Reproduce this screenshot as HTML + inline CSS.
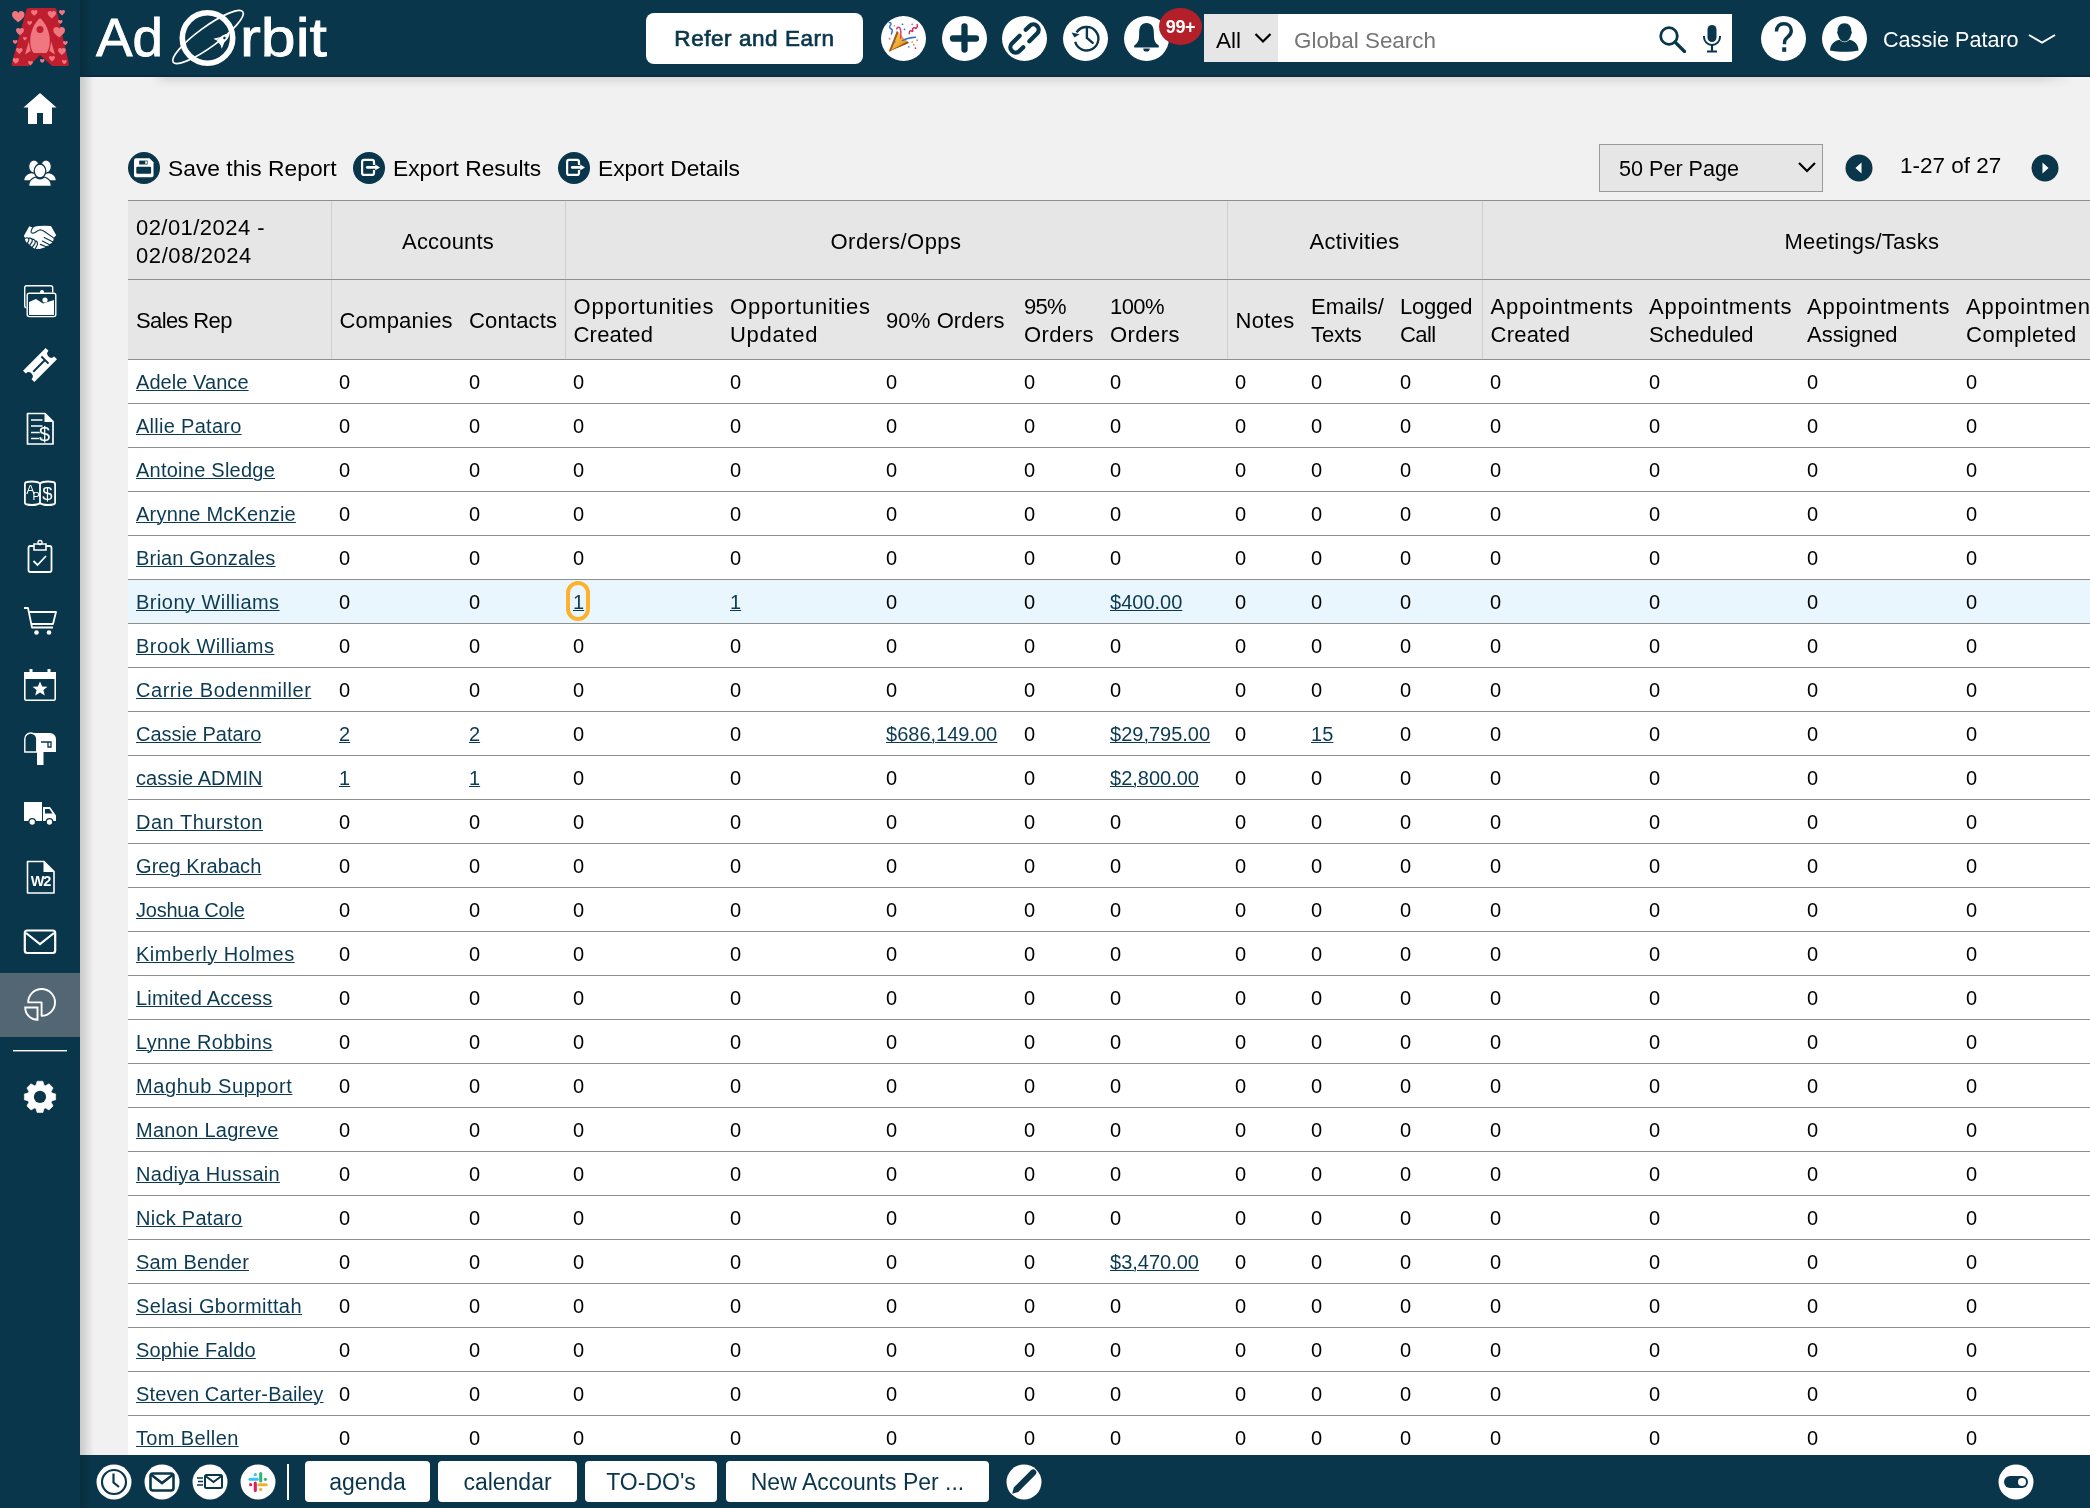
<!DOCTYPE html>
<html><head><meta charset="utf-8">
<style>
*{box-sizing:border-box;margin:0;padding:0}
html,body{width:2090px;height:1508px;overflow:hidden;-webkit-font-smoothing:antialiased;background:#f1f1f1;font-family:"Liberation Sans",sans-serif;color:#000}
.abs{position:absolute}
#hdr{position:absolute;left:0;top:0;width:2090px;height:77px;background:#0a364b}
#side{position:absolute;left:0;top:0;width:80px;height:1508px;background:#0a364b;z-index:5}
#shadowL{position:absolute;left:80px;top:77px;width:14px;height:1380px;background:linear-gradient(to right,rgba(0,0,0,0.16),rgba(0,0,0,0))}
#foot{position:absolute;left:80px;top:1455px;width:2010px;height:53px;background:#0a364b;z-index:4}
.circ{position:absolute;border-radius:50%;background:#fff}
table{will-change:transform;position:absolute;left:128px;top:200px;border-collapse:collapse;table-layout:fixed;width:2113px;background:#fff}
th{font-weight:normal;text-align:left;background:#e6e6e6;font-size:22px;line-height:28px;padding:2px 0 0 8px;vertical-align:middle;white-space:nowrap}
thead tr.r1 th{height:79px;padding-top:4px;border-top:1px solid #8f8f8f;border-bottom:1px solid #8f8f8f}
thead tr.r2 th{height:80px;border-bottom:1px solid #8f8f8f}
th.g{text-align:center;padding:0}
.vb{border-left:1px solid #cfcfcf}
td{font-size:20px;height:44px;padding:2px 0 0 8px;border-bottom:1px solid #8f8f8f;white-space:nowrap;vertical-align:middle}
td a{color:#0b3a52;text-decoration:underline;text-underline-offset:0.7px;text-decoration-thickness:1px}
tr.hl td{background:#e9f6fe}
</style></head>
<body>
<div id="root" style="position:absolute;left:0;top:0;width:2090px;height:1508px;will-change:transform;overflow:hidden">
<div id="hdr"></div>
<!-- HEADER -->
<div id="hdrin" style="position:absolute;left:0;top:0;width:2090px;height:77px;z-index:6">
<div style="position:absolute;left:80px;top:0;width:12px;height:77px;background:linear-gradient(to right,rgba(0,0,0,0.18),rgba(0,0,0,0))"></div>
<!-- red A logo -->
<svg class="abs" style="left:5px;top:3px" width="70" height="70" viewBox="0 0 70 70">
<path d="M23.5 5 L49.5 5 Q51 5 51.5 6.5 L64 61 Q64.3 63 62.5 63 L48 63 Q47 63 46 62 L35 52 L25 62 Q24 63 23 63 L8 63 Q6.3 63 6.6 61 L21.5 6.5 Q22 5 23.5 5 Z" fill="#be1e2d"/>
<g fill="#f07680">
<path d="M35 15 C40 19 44.8 28 44.8 38 C44.8 43 43.5 47.5 41.5 50 L28.5 50 C26.5 47.5 25.2 43 25.2 38 C25.2 28 30 19 35 15 Z"/>
<path d="M23.8 38.5 L20 51.5 L25.6 48 Z"/><path d="M46.2 38.5 L50 51.5 L44.4 48 Z"/>
</g>
<circle cx="35" cy="26.5" r="3.5" fill="#be1e2d"/>
<g fill="#f07680"><path transform="translate(7 8.1) scale(12.5)" d="M0.5 0.9 C0.2 0.65 0 0.5 0 0.27 C0 0.1 0.12 0 0.27 0 C0.38 0 0.46 0.07 0.5 0.15 C0.54 0.07 0.62 0 0.73 0 C0.88 0 1 0.1 1 0.27 C1 0.5 0.8 0.65 0.5 0.9 Z"/><path transform="translate(26 7) scale(6.5)" d="M0.5 0.9 C0.2 0.65 0 0.5 0 0.27 C0 0.1 0.12 0 0.27 0 C0.38 0 0.46 0.07 0.5 0.15 C0.54 0.07 0.62 0 0.73 0 C0.88 0 1 0.1 1 0.27 C1 0.5 0.8 0.65 0.5 0.9 Z"/><path transform="translate(42.7 8) scale(8.3)" d="M0.5 0.9 C0.2 0.65 0 0.5 0 0.27 C0 0.1 0.12 0 0.27 0 C0.38 0 0.46 0.07 0.5 0.15 C0.54 0.07 0.62 0 0.73 0 C0.88 0 1 0.1 1 0.27 C1 0.5 0.8 0.65 0.5 0.9 Z"/><path transform="translate(54 7) scale(6)" d="M0.5 0.9 C0.2 0.65 0 0.5 0 0.27 C0 0.1 0.12 0 0.27 0 C0.38 0 0.46 0.07 0.5 0.15 C0.54 0.07 0.62 0 0.73 0 C0.88 0 1 0.1 1 0.27 C1 0.5 0.8 0.65 0.5 0.9 Z"/><path transform="translate(53 17) scale(4.5)" d="M0.5 0.9 C0.2 0.65 0 0.5 0 0.27 C0 0.1 0.12 0 0.27 0 C0.38 0 0.46 0.07 0.5 0.15 C0.54 0.07 0.62 0 0.73 0 C0.88 0 1 0.1 1 0.27 C1 0.5 0.8 0.65 0.5 0.9 Z"/><path transform="translate(22.3 18) scale(4.7)" d="M0.5 0.9 C0.2 0.65 0 0.5 0 0.27 C0 0.1 0.12 0 0.27 0 C0.38 0 0.46 0.07 0.5 0.15 C0.54 0.07 0.62 0 0.73 0 C0.88 0 1 0.1 1 0.27 C1 0.5 0.8 0.65 0.5 0.9 Z"/><path transform="translate(11 25) scale(8)" d="M0.5 0.9 C0.2 0.65 0 0.5 0 0.27 C0 0.1 0.12 0 0.27 0 C0.38 0 0.46 0.07 0.5 0.15 C0.54 0.07 0.62 0 0.73 0 C0.88 0 1 0.1 1 0.27 C1 0.5 0.8 0.65 0.5 0.9 Z"/><path transform="translate(48.3 24) scale(11.7)" d="M0.5 0.9 C0.2 0.65 0 0.5 0 0.27 C0 0.1 0.12 0 0.27 0 C0.38 0 0.46 0.07 0.5 0.15 C0.54 0.07 0.62 0 0.73 0 C0.88 0 1 0.1 1 0.27 C1 0.5 0.8 0.65 0.5 0.9 Z"/><path transform="translate(18 34) scale(3.8)" d="M0.5 0.9 C0.2 0.65 0 0.5 0 0.27 C0 0.1 0.12 0 0.27 0 C0.38 0 0.46 0.07 0.5 0.15 C0.54 0.07 0.62 0 0.73 0 C0.88 0 1 0.1 1 0.27 C1 0.5 0.8 0.65 0.5 0.9 Z"/><path transform="translate(7.9 37) scale(4.6)" d="M0.5 0.9 C0.2 0.65 0 0.5 0 0.27 C0 0.1 0.12 0 0.27 0 C0.38 0 0.46 0.07 0.5 0.15 C0.54 0.07 0.62 0 0.73 0 C0.88 0 1 0.1 1 0.27 C1 0.5 0.8 0.65 0.5 0.9 Z"/><path transform="translate(58 38) scale(4.7)" d="M0.5 0.9 C0.2 0.65 0 0.5 0 0.27 C0 0.1 0.12 0 0.27 0 C0.38 0 0.46 0.07 0.5 0.15 C0.54 0.07 0.62 0 0.73 0 C0.88 0 1 0.1 1 0.27 C1 0.5 0.8 0.65 0.5 0.9 Z"/><path transform="translate(11 45) scale(6.6)" d="M0.5 0.9 C0.2 0.65 0 0.5 0 0.27 C0 0.1 0.12 0 0.27 0 C0.38 0 0.46 0.07 0.5 0.15 C0.54 0.07 0.62 0 0.73 0 C0.88 0 1 0.1 1 0.27 C1 0.5 0.8 0.65 0.5 0.9 Z"/><path transform="translate(53 45) scale(7.8)" d="M0.5 0.9 C0.2 0.65 0 0.5 0 0.27 C0 0.1 0.12 0 0.27 0 C0.38 0 0.46 0.07 0.5 0.15 C0.54 0.07 0.62 0 0.73 0 C0.88 0 1 0.1 1 0.27 C1 0.5 0.8 0.65 0.5 0.9 Z"/><path transform="translate(7.7 55) scale(6.3)" d="M0.5 0.9 C0.2 0.65 0 0.5 0 0.27 C0 0.1 0.12 0 0.27 0 C0.38 0 0.46 0.07 0.5 0.15 C0.54 0.07 0.62 0 0.73 0 C0.88 0 1 0.1 1 0.27 C1 0.5 0.8 0.65 0.5 0.9 Z"/><path transform="translate(23 58) scale(4.9)" d="M0.5 0.9 C0.2 0.65 0 0.5 0 0.27 C0 0.1 0.12 0 0.27 0 C0.38 0 0.46 0.07 0.5 0.15 C0.54 0.07 0.62 0 0.73 0 C0.88 0 1 0.1 1 0.27 C1 0.5 0.8 0.65 0.5 0.9 Z"/><path transform="translate(35 56) scale(4.5)" d="M0.5 0.9 C0.2 0.65 0 0.5 0 0.27 C0 0.1 0.12 0 0.27 0 C0.38 0 0.46 0.07 0.5 0.15 C0.54 0.07 0.62 0 0.73 0 C0.88 0 1 0.1 1 0.27 C1 0.5 0.8 0.65 0.5 0.9 Z"/><path transform="translate(44 53) scale(6)" d="M0.5 0.9 C0.2 0.65 0 0.5 0 0.27 C0 0.1 0.12 0 0.27 0 C0.38 0 0.46 0.07 0.5 0.15 C0.54 0.07 0.62 0 0.73 0 C0.88 0 1 0.1 1 0.27 C1 0.5 0.8 0.65 0.5 0.9 Z"/><path transform="translate(57 57) scale(4.7)" d="M0.5 0.9 C0.2 0.65 0 0.5 0 0.27 C0 0.1 0.12 0 0.27 0 C0.38 0 0.46 0.07 0.5 0.15 C0.54 0.07 0.62 0 0.73 0 C0.88 0 1 0.1 1 0.27 C1 0.5 0.8 0.65 0.5 0.9 Z"/></g>
</svg>
<!-- AdOrbit wordmark -->
<svg class="abs" style="left:90px;top:0" width="250" height="77" viewBox="90 0 250 77">
<text x="96" y="56" font-family="Liberation Sans" font-size="53" fill="#fff" stroke="#fff" stroke-width="0.8" textLength="67" lengthAdjust="spacingAndGlyphs">Ad</text>
<circle cx="207.5" cy="38" r="25.2" fill="none" stroke="#fff" stroke-width="5.6"/>
<ellipse cx="208" cy="37" rx="43" ry="10" fill="none" stroke="#fff" stroke-width="1.7" transform="rotate(-36 208 37)"/>
<g transform="translate(222.5 39.5) rotate(50)"><path d="M0 -9 C3.2 -6 3.8 -1 3.2 5 L-3.2 5 C-3.8 -1 -3.2 -6 0 -9 Z M-3.2 0 L-6.5 6.5 L-3 5 Z M3.2 0 L6.5 6.5 L3 5 Z" fill="#fff"/><circle cx="0" cy="-2.5" r="1.3" fill="#0a364b"/></g>
<text x="240" y="56" font-family="Liberation Sans" font-size="53" fill="#fff" stroke="#fff" stroke-width="0.8" textLength="87" lengthAdjust="spacingAndGlyphs">rbit</text>
</svg>
<!-- Refer and Earn -->
<div class="abs" style="left:646px;top:13px;width:217px;height:51px;background:#fff;border-radius:8px;color:#0a364b;font-weight:normal;-webkit-text-stroke:0.7px #0a364b;font-size:22.5px;line-height:51px;text-align:center;letter-spacing:0.55px">Refer and Earn</div>
<!-- circle icons -->
<div class="circ" style="left:881px;top:16px;width:45px;height:45px"></div>
<svg class="abs" style="left:881px;top:16px" width="45" height="45" viewBox="0 0 45 45">
<defs><linearGradient id="pg" x1="0" y1="0" x2="1" y2="1"><stop offset="0" stop-color="#fbe26a"/><stop offset="0.6" stop-color="#eea52c"/><stop offset="1" stop-color="#b5621a"/></linearGradient></defs>
<path d="M7.9 35.5 L15.9 14.9 L27.8 26.9 Z" fill="url(#pg)"/>
<path d="M7.9 35.5 L15.9 14.9 L17.5 16.5 L10 35 Z" fill="#a8561c"/>
<path d="M7.9 35.5 L27.8 26.9 L26.5 25.6 L9 34.8 Z" fill="#9c4d15"/>
<path d="M8.2 6.5 Q10.5 6.5 10 8.5 Q7.5 11 9.5 12.5 Q12 13.5 11 16 L10.4 18" stroke="#2f6fe0" stroke-width="1.4" fill="none" stroke-linecap="round"/>
<path d="M15.6 12.8 Q17.2 10 19 12 Q20.4 15 19.6 22" stroke="#e0306e" stroke-width="1.4" fill="none" stroke-linecap="round"/>
<path d="M28.2 17.8 Q28.2 14 30.5 15 Q32.5 16.5 31.5 13 Q33 11 35 12.5 Q37 11 36.2 8.5" stroke="#d02e5e" stroke-width="1.4" fill="none" stroke-linecap="round"/>
<path d="M21.5 24.5 Q27 21.5 34.5 21.2" stroke="#2f6fe0" stroke-width="1.4" fill="none" stroke-linecap="round"/>
<g><circle cx="21.5" cy="8.3" r="0.9" fill="#2f6fe0"/><circle cx="13.3" cy="9.9" r="0.9" fill="#e2b93b"/><circle cx="23.5" cy="13.3" r="0.9" fill="#2f6fe0"/><circle cx="31.2" cy="8.3" r="0.9" fill="#e2609a"/><circle cx="8.6" cy="22.7" r="0.9" fill="#e2609a"/><circle cx="13.6" cy="25.9" r="0.9" fill="#2f6fe0"/><circle cx="31.2" cy="25.9" r="0.9" fill="#d9b13b"/><circle cx="36.1" cy="24.2" r="0.9" fill="#ea7a3a"/><circle cx="32.8" cy="28.8" r="0.9" fill="#ea7a3a"/><circle cx="27.8" cy="30.8" r="0.9" fill="#3f7fe0"/><circle cx="34.5" cy="32.2" r="0.9" fill="#d8306a"/></g>
</svg>
<div class="circ" style="left:942px;top:16px;width:45px;height:45px"></div>
<svg class="abs" style="left:942px;top:16px" width="45" height="45" viewBox="0 0 45 45"><path d="M22.5 10.5 V33.5 M11 22.5 H34" stroke="#0a364b" stroke-width="6.3" stroke-linecap="round"/></svg>
<div class="circ" style="left:1002px;top:16px;width:45px;height:45px"></div>
<svg class="abs" style="left:1002px;top:16px" width="45" height="45" viewBox="0 0 45 45"><g transform="translate(22.5 22.5) rotate(-45)" fill="none" stroke="#0a364b" stroke-width="4.3" stroke-linecap="round"><path d="M7 -5.3 H12.5 A5.3 5.3 0 0 1 12.5 5.3 H1.5"/><path d="M-7 5.3 H-12.5 A5.3 5.3 0 0 1 -12.5 -5.3 H-1.5"/></g></svg>
<div class="circ" style="left:1063px;top:16px;width:45px;height:45px"></div>
<svg class="abs" style="left:1063px;top:16px" width="45" height="45" viewBox="0 0 45 45"><g fill="none" stroke="#0a364b" stroke-width="2.4"><path d="M12.2 25.8 A11.8 11.8 0 1 0 13.6 16.4"/><path d="M23.9 12.3 V22 L29.7 26.8" stroke-linecap="round"/></g><path d="M8.6 16.6 L16.6 18.3 L11.4 21.6 Z" fill="#0a364b"/></svg>
<div class="circ" style="left:1124px;top:16px;width:45px;height:45px"></div>
<svg class="abs" style="left:1124px;top:16px" width="45" height="45" viewBox="0 0 45 45"><path d="M22.5 7 C17.5 7 15.3 10.5 15.2 16 L15 21.5 C14.8 25 13.2 27.5 10.2 29.6 V31.4 H34.8 V29.6 C31.8 27.5 30.2 25 30 21.5 L29.8 16 C29.7 10.5 27.5 7 22.5 7 Z" fill="#0a364b"/><path d="M19.3 32.4 H25.7 a3.2 3.2 0 0 1 -6.4 0Z" fill="#0a364b"/></svg>
<div class="abs" style="left:1159px;top:8px;width:43px;height:37px;border-radius:50%;background:#b3202a;color:#fff;font-weight:bold;font-size:18px;line-height:39px;text-align:center;letter-spacing:-0.3px">99+</div>
<!-- search -->
<div class="abs" style="left:1204px;top:14px;width:74px;height:48px;background:#e6e6e6"></div>
<div class="abs" style="left:1216px;top:14px;height:48px;line-height:53px;font-size:22.5px;color:#000">All</div>
<svg class="abs" style="left:1254px;top:32px" width="18" height="12" viewBox="0 0 18 12"><path d="M1.5 2 L9 9.5 L16.5 2" fill="none" stroke="#000" stroke-width="2.2"/></svg>
<div class="abs" style="left:1278px;top:14px;width:454px;height:48px;background:#fff"></div>
<div class="abs" style="left:1294px;top:14px;height:48px;line-height:53px;font-size:22.4px;color:#757575">Global Search</div>
<svg class="abs" style="left:1658px;top:25px" width="30" height="28" viewBox="0 0 30 28"><circle cx="11" cy="11" r="8.3" fill="none" stroke="#0a364b" stroke-width="2.8"/><path d="M17 17 L26.5 26.5" stroke="#0a364b" stroke-width="3.2" stroke-linecap="round"/></svg>
<svg class="abs" style="left:1700px;top:24px" width="24" height="30" viewBox="0 0 24 30"><rect x="7.5" y="1" width="9" height="17" rx="4.5" fill="#0a364b"/><path d="M4 12 V13 a8 8 0 0 0 16 0 V12" fill="none" stroke="#0a364b" stroke-width="2"/><path d="M12 21 V27 M7 27.5 H17" stroke="#0a364b" stroke-width="2.2"/></svg>
<!-- help / user -->
<div class="circ" style="left:1761px;top:16px;width:45px;height:45px"></div>
<svg class="abs" style="left:1761px;top:16px" width="45" height="45" viewBox="0 0 45 45"><path d="M15.5 15.5 C15.5 10.5 18.5 7.8 22.8 7.8 C27.3 7.8 30.3 10.8 30.3 14.8 C30.3 18.2 28.5 19.8 26.3 21.4 C24.3 22.9 23.5 23.8 23.5 26.5 V28.3" fill="none" stroke="#0a364b" stroke-width="3.4"/><rect x="21.2" y="31.3" width="4" height="4.5" fill="#0a364b"/></svg>
<div class="circ" style="left:1822px;top:16px;width:45px;height:45px"></div>
<svg class="abs" style="left:1822px;top:16px" width="45" height="45" viewBox="0 0 45 45"><path d="M22.5 7.3 C18 7.3 15.6 10.5 15.6 15 C15 15.5 15 18 15.9 18.5 C16.8 22.5 19.2 25.6 22.5 25.6 C25.8 25.6 28.2 22.5 29.1 18.5 C30 18 30 15.5 29.4 15 C29.4 10.5 27 7.3 22.5 7.3Z" fill="#0a364b"/><path d="M8 34.5 C8 28.5 12.5 25 17.5 23.8 C19 25.3 20.7 26.3 22.5 26.3 C24.3 26.3 26 25.3 27.5 23.8 C32.5 25 36.5 28.5 36.5 34.5 C30 36.2 15 36.2 8 34.5 Z" fill="#0a364b"/></svg>
<div class="abs" style="left:1883px;top:16px;height:48px;line-height:48px;font-size:21.6px;color:#fff">Cassie Pataro</div>
<svg class="abs" style="left:2027px;top:32px" width="30" height="14" viewBox="0 0 30 14"><path d="M2 3 L15 10.5 L28 3" fill="none" stroke="#fff" stroke-width="2"/></svg>
</div>

<div id="side"></div>
<!-- SIDEBAR ICONS -->
<div class="abs" style="left:0;top:973px;width:80px;height:64px;background:#526673;z-index:6"></div>
<svg class="abs" style="left:0;top:0;z-index:7" width="80" height="1508" viewBox="0 0 80 1508">
<g fill="#fff">
<!-- home -->
<path d="M40 93 L56.5 107.5 L52 107.5 L52 124 L43 124 L43 113 L37 113 L37 124 L28 124 L28 107.5 L23.5 107.5 Z"/>
<!-- people -->
<g stroke="#0a364b" stroke-width="1.3">
<path d="M23.5 181 C23.5 176 26.5 173.5 31 172.5 L38 172.5 L38 181 Z"/>
<path d="M56.5 181 C56.5 176 53.5 173.5 49 172.5 L42 172.5 L42 181 Z"/>
<ellipse cx="34" cy="166.5" rx="5.4" ry="6.6"/><ellipse cx="46" cy="166.5" rx="5.4" ry="6.6"/>
<ellipse cx="40" cy="171" rx="5.8" ry="7"/>
<path d="M28.5 186.5 C28.5 181.5 31 178.5 35.5 177 C37 178.2 38.6 178.8 40 178.8 C41.4 178.8 43 178.2 44.5 177 C49 178.5 51.5 181.5 51.5 186.5 Z"/>
</g>
<!-- handshake -->
<path d="M29.3 226.3 L33 227.8 Q35 226.4 38.5 226.1 Q44 225.6 51 226 L56.2 235.3 L53.6 237.9 Q54 240 52.8 241.2 Q52 243.4 50 243.9 Q49 245.8 46.8 246 Q45 247.8 42 248.3 Q40 249.2 37.6 248.8 Q35.5 249.5 33.5 248 Q31.5 247.3 31 245.8 Q28.8 245.6 28.6 243.6 Q26 243.3 25.6 241 Q24.5 239.5 25.2 238 L23.8 236 Z"/>
<g fill="none" stroke="#0a364b" stroke-width="1.15" stroke-linecap="round">
<path d="M32.6 227.8 Q30.6 231 31.3 232.5 Q32.5 234 35.5 232.2 Q38.3 229.8 40.3 229.7 Q42 229.8 44 231.2 L53.6 237.9"/>
<path d="M44.2 237.6 L52.6 241.8 M42.4 241.1 L50 245 M40.4 244.4 L46.8 247"/>
<path d="M25.6 238.2 Q27 237.3 28.4 238.3 Q29.3 239.8 28.6 241.3 L27 243.4 M28.4 238.3 Q30.5 237.5 31.9 239.2 Q32.7 240.6 31.9 242.2 L29.3 245.6 M31.9 239.2 Q33.8 238.7 35 240.7 Q35.6 242.2 34.8 243.6 L32 247.6 M35 240.7 Q37.4 241 37.5 243.6 Q37.5 245 36.6 246.2 L35.4 248.6"/>
</g>
<!-- images -->
<rect x="24.7" y="285.7" width="28" height="22" rx="2" fill="none" stroke="#fff" stroke-width="1.4"/>
<rect x="26.5" y="292.5" width="30" height="25" rx="2" fill="#0a364b"/>
<rect x="27.2" y="293.2" width="28.6" height="23.4" rx="2" fill="none" stroke="#fff" stroke-width="1.4"/>
<path d="M29 315 L29 302 L36 299 L43 303.5 L54 300 L54 315 Z"/><circle cx="45" cy="300" r="2.6"/><circle cx="42" cy="292" r="2" />
<!-- ticket -->
<g transform="rotate(-45 40 365)"><path d="M24 357 L56 357 L56 361 a4 4 0 0 0 0 8 L56 373 L24 373 L24 369 a4 4 0 0 0 0 -8 Z"/></g>
<g transform="rotate(-45 40 365)" stroke="#0a364b" stroke-width="2" fill="none"><path d="M30.5 365 H47 M47 360 V370"/></g>
<!-- doc $ -->
<path d="M27.5 413.5 H45 L53 421.5 V444 H27.5 Z" fill="none" stroke="#fff" stroke-width="1.7" stroke-linejoin="round"/>
<path d="M44.5 413.5 V422 H53 Z"/>
<path d="M31 420 H42.5 M31 426 H42.5 M31 432.5 H42.5 M31 438.5 H42.5" stroke="#fff" stroke-width="1.4"/>
<text x="44.6" y="440.5" font-family="Liberation Sans" font-size="20" text-anchor="middle" fill="#fff" stroke="#0a364b" stroke-width="1.2" paint-order="stroke">$</text>
<!-- AP$ -->
<path d="M24.9 484.2 Q24.9 482.2 27 482 Q32 481 36.8 482 Q39 482.5 40 483.6 Q41 482.5 43.2 482 Q48 481 53 482 Q55.1 482.2 55.1 484.2 V502.6 Q55.1 504.4 53 504.5 Q48 505.5 43.2 504.5 Q41 504 40 503 Q39 504 36.8 504.5 Q32 505.5 27 504.5 Q24.9 504.4 24.9 502.6 Z M40 483.6 V503" fill="none" stroke="#fff" stroke-width="1.8"/>
<text x="26.3" y="494" font-family="Liberation Sans" font-size="12.5" fill="#fff">A</text><text x="32.6" y="500" font-family="Liberation Sans" font-size="11" fill="#fff">P</text>
<text x="47.5" y="499.5" font-family="Liberation Sans" font-size="18.5" text-anchor="middle" fill="#fff">$</text>
<!-- clipboard -->
<rect x="28.5" y="546" width="23" height="26" rx="2" fill="none" stroke="#fff" stroke-width="1.8"/>
<path d="M34 544 H46 V550 H34 Z" fill="#0a364b" stroke="#fff" stroke-width="1.6"/><circle cx="40" cy="542.5" r="2" fill="none" stroke="#fff" stroke-width="1.4"/>
<path d="M33.5 561 L37.5 565 L46 556" fill="none" stroke="#fff" stroke-width="1.8"/>
<!-- cart -->
<path d="M24 608 H28 L32 627.5 H53 M29.5 612 H56 L53 624 H31" fill="none" stroke="#fff" stroke-width="1.8" stroke-linejoin="round"/>
<circle cx="36.5" cy="632.5" r="2.3"/><circle cx="49" cy="632.5" r="2.3"/>
<!-- calendar -->
<rect x="24.8" y="672.8" width="30.4" height="27.4" rx="1.5" fill="none" stroke="#fff" stroke-width="1.6"/>
<rect x="24" y="672" width="32" height="7"/><rect x="29.5" y="669" width="3" height="6"/><rect x="47.5" y="669" width="3" height="6"/>
<path d="M40 681.5 L42.2 686.5 L47.5 686.8 L43.4 690 L44.8 695.5 L40 692.5 L35.2 695.5 L36.6 690 L32.5 686.8 L37.8 686.5 Z"/>
<!-- mailbox -->
<path d="M24.8 752 V739 a6 6 0 0 1 12 0 V752 Z" fill="none" stroke="#fff" stroke-width="1.4"/>
<path d="M30.8 733 H50 a6 6 0 0 1 6 6 V752 H43.5 V765 H37 V752 H36.8 V739 a6 6 0 0 0 -6 -6 Z"/>
<path d="M41 742 H51 V747 H48 V742" fill="none" stroke="#0a364b" stroke-width="1.3"/>
<!-- truck -->
<path d="M24 802 H42 V821 H24 Z M43 807 H50 L56 815.5 V821 H43 Z"/>
<path d="M45 809 H49.5 L52.5 813.5 H45 Z" fill="#0a364b"/>
<circle cx="32.2" cy="822" r="3.3" stroke="#0a364b" stroke-width="1.3"/><circle cx="49.5" cy="822" r="3.3" stroke="#0a364b" stroke-width="1.3"/>
<!-- W2 -->
<path d="M27.5 861.5 H44 L54 871.5 V893 H27.5 Z" fill="none" stroke="#fff" stroke-width="1.6" stroke-linejoin="round"/>
<path d="M43.5 861.5 V872 H54 Z"/>
<text x="40.5" y="886" font-family="Liberation Sans" font-size="14.5" font-weight="bold" text-anchor="middle" fill="#fff" letter-spacing="-1">W2</text>
<!-- mail -->
<rect x="24.8" y="930.5" width="30.4" height="22.5" rx="2.5" fill="none" stroke="#fff" stroke-width="2.2"/>
<path d="M26 933 L40 944 L54 933" fill="none" stroke="#fff" stroke-width="2.2"/>
<!-- reports -->
<path d="M28.2 1002.4 A13.4 13.4 0 1 1 41.6 1015.8 L41.6 1002.4 Z" fill="none" stroke="#fff" stroke-width="1.9" stroke-linejoin="round"/>
<path d="M25.2 1007.5 A12.3 12.3 0 0 0 37.5 1019.8 L37.5 1007.5 Z" fill="none" stroke="#fff" stroke-width="1.9" stroke-linejoin="miter"/>
<!-- divider -->
<rect x="13" y="1050" width="54" height="1.4"/>
<!-- gear -->
<path d="M35.96 1085.18 L37.10 1081.27 L42.90 1081.27 L44.04 1085.18 L45.44 1085.75 L49.01 1083.80 L53.10 1087.89 L51.15 1091.46 L51.72 1092.86 L55.63 1094.00 L55.63 1099.80 L51.72 1100.94 L51.15 1102.34 L53.10 1105.91 L49.01 1110.00 L45.44 1108.05 L44.04 1108.62 L42.90 1112.53 L37.10 1112.53 L35.96 1108.62 L34.56 1108.05 L30.99 1110.00 L26.90 1105.91 L28.85 1102.34 L28.28 1100.94 L24.37 1099.80 L24.37 1094.00 L28.28 1092.86 L28.85 1091.46 L26.90 1087.89 L30.99 1083.80 L34.56 1085.75 Z" stroke="#fff" stroke-width="0.6" stroke-linejoin="round"/>
<circle cx="40" cy="1096.9" r="6.1" fill="#0a364b"/>
</g>
</svg>

<div id="shadowL"></div>
<!-- TOOLBAR -->
<svg class="abs" style="left:128px;top:152px" width="32" height="32" viewBox="0 0 32 32"><circle cx="16" cy="16" r="16" fill="#0a364b"/><path d="M8 6.3 H21.5 L25.5 10.3 V23.3 a2 2 0 0 1 -2 2 H8 a2 2 0 0 1 -2 -2 V8.3 a2 2 0 0 1 2 -2Z" fill="#fff"/><rect x="8.3" y="14.8" width="14.8" height="7" rx="1" fill="#0a364b"/><rect x="11.2" y="8.6" width="8.4" height="3.9" fill="#0a364b"/><rect x="17.2" y="9.3" width="1.7" height="2.5" fill="#fff"/></svg>
<div class="abs" style="left:168px;top:150px;line-height:36px;font-size:22.8px;color:#000;white-space:nowrap">Save this Report</div>
<svg class="abs" style="left:353px;top:152px" width="32" height="32" viewBox="0 0 32 32"><circle cx="16" cy="16" r="16" fill="#0a364b"/><path d="M21 12.9 V9.9 a2 2 0 0 0 -2 -2 H11.1 a2 2 0 0 0 -2 2 V20.9 a2 2 0 0 0 2 2 H19 a2 2 0 0 0 2 -2 V18.1" fill="none" stroke="#fff" stroke-width="2.2"/><path d="M14.3 15.4 H23.5" stroke="#fff" stroke-width="2.8" stroke-linecap="round"/><path d="M22.3 12.6 L27 15.4 L22.3 18.2 Z" fill="#fff"/></svg>
<div class="abs" style="left:393px;top:150px;line-height:36px;font-size:22.8px;color:#000;white-space:nowrap">Export Results</div>
<svg class="abs" style="left:558px;top:152px" width="32" height="32" viewBox="0 0 32 32"><circle cx="16" cy="16" r="16" fill="#0a364b"/><path d="M21 12.9 V9.9 a2 2 0 0 0 -2 -2 H11.1 a2 2 0 0 0 -2 2 V20.9 a2 2 0 0 0 2 2 H19 a2 2 0 0 0 2 -2 V18.1" fill="none" stroke="#fff" stroke-width="2.2"/><path d="M14.3 15.4 H23.5" stroke="#fff" stroke-width="2.8" stroke-linecap="round"/><path d="M22.3 12.6 L27 15.4 L22.3 18.2 Z" fill="#fff"/></svg>
<div class="abs" style="left:598px;top:150px;line-height:36px;font-size:22.8px;color:#000;white-space:nowrap">Export Details</div>
<!-- per page -->
<div class="abs" style="left:1599px;top:144px;width:224px;height:48px;background:#e6e6e6;border:1px solid #9a9a9a"></div>
<div class="abs" style="left:1619px;top:150px;line-height:38px;font-size:21.6px;color:#000;white-space:nowrap">50 Per Page</div>
<svg class="abs" style="left:1797px;top:160px" width="20" height="14" viewBox="0 0 20 14"><path d="M2 3 L10 11 L18 3" fill="none" stroke="#000" stroke-width="2.2"/></svg>
<svg class="abs" style="left:1845px;top:154px" width="28" height="28" viewBox="0 0 28 28"><circle cx="14" cy="14" r="13.5" fill="#0a364b"/><path d="M16.5 8.5 L10.5 14 L16.5 19.5 Z" fill="#fff"/></svg>
<div class="abs" style="left:1900px;top:148px;line-height:36px;font-size:22.5px;color:#000;white-space:nowrap">1-27 of 27</div>
<svg class="abs" style="left:2031px;top:154px" width="28" height="28" viewBox="0 0 28 28"><circle cx="14" cy="14" r="13.5" fill="#0a364b"/><path d="M11.5 8.5 L17.5 14 L11.5 19.5 Z" fill="#fff"/></svg>


<table>
<colgroup>
<col style="width:203px"><col style="width:130px"><col style="width:104px"><col style="width:157px"><col style="width:156px"><col style="width:138px"><col style="width:86px"><col style="width:125px"><col style="width:76px"><col style="width:89px"><col style="width:90px"><col style="width:159px"><col style="width:158px"><col style="width:159px"><col style="width:283px">
</colgroup>
<thead>
<tr class="r1"><th><span style="letter-spacing:0.45px">02/01/2024 -</span><br><span style="letter-spacing:0.58px">02/08/2024</span></th><th class="g vb" colspan="2"><span style="letter-spacing:0.17px">Accounts</span></th><th class="g vb" colspan="5"><span style="letter-spacing:0.46px">Orders/Opps</span></th><th class="g vb" colspan="3"><span style="letter-spacing:0.34px">Activities</span></th><th class="g vb" colspan="4"><span style="letter-spacing:0.22px">Meetings/Tasks</span></th></tr>
<tr class="r2"><th><span style="letter-spacing:-0.63px">Sales Rep</span></th><th class="vb"><span style="letter-spacing:0.23px">Companies</span></th><th><span style="letter-spacing:0.18px">Contacts</span></th><th class="vb"><span style="letter-spacing:0.77px">Opportunities</span><br><span style="letter-spacing:0.2px">Created</span></th><th><span style="letter-spacing:0.77px">Opportunities</span><br><span style="letter-spacing:0.72px">Updated</span></th><th><span style="letter-spacing:0.12px">90% Orders</span></th><th><span style="letter-spacing:-0.77px">95%</span><br><span style="letter-spacing:0.45px">Orders</span></th><th><span style="letter-spacing:-0.59px">100%</span><br><span style="letter-spacing:0.45px">Orders</span></th><th class="vb"><span style="letter-spacing:0.33px">Notes</span></th><th><span style="letter-spacing:0.13px">Emails/</span><br><span style="letter-spacing:-0.14px">Texts</span></th><th><span style="letter-spacing:-0.22px">Logged</span><br><span style="letter-spacing:-0.6px">Call</span></th><th class="vb"><span style="letter-spacing:0.72px">Appointments</span><br><span style="letter-spacing:0.2px">Created</span></th><th><span style="letter-spacing:0.72px">Appointments</span><br><span style="letter-spacing:0.06px">Scheduled</span></th><th><span style="letter-spacing:0.72px">Appointments</span><br><span style="letter-spacing:-0.0px">Assigned</span></th><th><span style="letter-spacing:0.72px">Appointments</span><br><span style="letter-spacing:0.48px">Completed</span></th></tr>
</thead>
<tbody id="tb">
<tr><td><a style="letter-spacing:0.06px">Adele Vance</a></td><td>0</td><td>0</td><td>0</td><td>0</td><td>0</td><td>0</td><td>0</td><td>0</td><td>0</td><td>0</td><td>0</td><td>0</td><td>0</td><td>0</td></tr>
<tr><td><a style="letter-spacing:0.28px">Allie Pataro</a></td><td>0</td><td>0</td><td>0</td><td>0</td><td>0</td><td>0</td><td>0</td><td>0</td><td>0</td><td>0</td><td>0</td><td>0</td><td>0</td><td>0</td></tr>
<tr><td><a style="letter-spacing:0.24px">Antoine Sledge</a></td><td>0</td><td>0</td><td>0</td><td>0</td><td>0</td><td>0</td><td>0</td><td>0</td><td>0</td><td>0</td><td>0</td><td>0</td><td>0</td><td>0</td></tr>
<tr><td><a style="letter-spacing:0.21px">Arynne McKenzie</a></td><td>0</td><td>0</td><td>0</td><td>0</td><td>0</td><td>0</td><td>0</td><td>0</td><td>0</td><td>0</td><td>0</td><td>0</td><td>0</td><td>0</td></tr>
<tr><td><a style="letter-spacing:0.2px">Brian Gonzales</a></td><td>0</td><td>0</td><td>0</td><td>0</td><td>0</td><td>0</td><td>0</td><td>0</td><td>0</td><td>0</td><td>0</td><td>0</td><td>0</td><td>0</td></tr>
<tr class="hl"><td><a style="letter-spacing:0.46px">Briony Williams</a></td><td>0</td><td>0</td><td><a class="focus">1</a></td><td><a>1</a></td><td>0</td><td>0</td><td><a>$400.00</a></td><td>0</td><td>0</td><td>0</td><td>0</td><td>0</td><td>0</td><td>0</td></tr>
<tr><td><a style="letter-spacing:0.44px">Brook Williams</a></td><td>0</td><td>0</td><td>0</td><td>0</td><td>0</td><td>0</td><td>0</td><td>0</td><td>0</td><td>0</td><td>0</td><td>0</td><td>0</td><td>0</td></tr>
<tr><td><a style="letter-spacing:0.54px">Carrie Bodenmiller</a></td><td>0</td><td>0</td><td>0</td><td>0</td><td>0</td><td>0</td><td>0</td><td>0</td><td>0</td><td>0</td><td>0</td><td>0</td><td>0</td><td>0</td></tr>
<tr><td><a style="letter-spacing:-0.03px">Cassie Pataro</a></td><td><a>2</a></td><td><a>2</a></td><td>0</td><td>0</td><td><a>$686,149.00</a></td><td>0</td><td><a>$29,795.00</a></td><td>0</td><td><a>15</a></td><td>0</td><td>0</td><td>0</td><td>0</td><td>0</td></tr>
<tr><td><a style="letter-spacing:0.08px">cassie ADMIN</a></td><td><a>1</a></td><td><a>1</a></td><td>0</td><td>0</td><td>0</td><td>0</td><td><a>$2,800.00</a></td><td>0</td><td>0</td><td>0</td><td>0</td><td>0</td><td>0</td><td>0</td></tr>
<tr><td><a style="letter-spacing:0.51px">Dan Thurston</a></td><td>0</td><td>0</td><td>0</td><td>0</td><td>0</td><td>0</td><td>0</td><td>0</td><td>0</td><td>0</td><td>0</td><td>0</td><td>0</td><td>0</td></tr>
<tr><td><a style="letter-spacing:0.07px">Greg Krabach</a></td><td>0</td><td>0</td><td>0</td><td>0</td><td>0</td><td>0</td><td>0</td><td>0</td><td>0</td><td>0</td><td>0</td><td>0</td><td>0</td><td>0</td></tr>
<tr><td><a style="letter-spacing:-0.24px">Joshua Cole</a></td><td>0</td><td>0</td><td>0</td><td>0</td><td>0</td><td>0</td><td>0</td><td>0</td><td>0</td><td>0</td><td>0</td><td>0</td><td>0</td><td>0</td></tr>
<tr><td><a style="letter-spacing:0.5px">Kimberly Holmes</a></td><td>0</td><td>0</td><td>0</td><td>0</td><td>0</td><td>0</td><td>0</td><td>0</td><td>0</td><td>0</td><td>0</td><td>0</td><td>0</td><td>0</td></tr>
<tr><td><a style="letter-spacing:0.22px">Limited Access</a></td><td>0</td><td>0</td><td>0</td><td>0</td><td>0</td><td>0</td><td>0</td><td>0</td><td>0</td><td>0</td><td>0</td><td>0</td><td>0</td><td>0</td></tr>
<tr><td><a style="letter-spacing:0.29px">Lynne Robbins</a></td><td>0</td><td>0</td><td>0</td><td>0</td><td>0</td><td>0</td><td>0</td><td>0</td><td>0</td><td>0</td><td>0</td><td>0</td><td>0</td><td>0</td></tr>
<tr><td><a style="letter-spacing:0.61px">Maghub Support</a></td><td>0</td><td>0</td><td>0</td><td>0</td><td>0</td><td>0</td><td>0</td><td>0</td><td>0</td><td>0</td><td>0</td><td>0</td><td>0</td><td>0</td></tr>
<tr><td><a style="letter-spacing:0.28px">Manon Lagreve</a></td><td>0</td><td>0</td><td>0</td><td>0</td><td>0</td><td>0</td><td>0</td><td>0</td><td>0</td><td>0</td><td>0</td><td>0</td><td>0</td><td>0</td></tr>
<tr><td><a style="letter-spacing:0.28px">Nadiya Hussain</a></td><td>0</td><td>0</td><td>0</td><td>0</td><td>0</td><td>0</td><td>0</td><td>0</td><td>0</td><td>0</td><td>0</td><td>0</td><td>0</td><td>0</td></tr>
<tr><td><a style="letter-spacing:0.28px">Nick Pataro</a></td><td>0</td><td>0</td><td>0</td><td>0</td><td>0</td><td>0</td><td>0</td><td>0</td><td>0</td><td>0</td><td>0</td><td>0</td><td>0</td><td>0</td></tr>
<tr><td><a style="letter-spacing:0.18px">Sam Bender</a></td><td>0</td><td>0</td><td>0</td><td>0</td><td>0</td><td>0</td><td><a>$3,470.00</a></td><td>0</td><td>0</td><td>0</td><td>0</td><td>0</td><td>0</td><td>0</td></tr>
<tr><td><a style="letter-spacing:0.41px">Selasi Gbormittah</a></td><td>0</td><td>0</td><td>0</td><td>0</td><td>0</td><td>0</td><td>0</td><td>0</td><td>0</td><td>0</td><td>0</td><td>0</td><td>0</td><td>0</td></tr>
<tr><td><a style="letter-spacing:0.16px">Sophie Faldo</a></td><td>0</td><td>0</td><td>0</td><td>0</td><td>0</td><td>0</td><td>0</td><td>0</td><td>0</td><td>0</td><td>0</td><td>0</td><td>0</td><td>0</td></tr>
<tr><td><a style="letter-spacing:0.15px">Steven Carter-Bailey</a></td><td>0</td><td>0</td><td>0</td><td>0</td><td>0</td><td>0</td><td>0</td><td>0</td><td>0</td><td>0</td><td>0</td><td>0</td><td>0</td><td>0</td></tr>
<tr><td><a style="letter-spacing:0.37px">Tom Bellen</a></td><td>0</td><td>0</td><td>0</td><td>0</td><td>0</td><td>0</td><td>0</td><td>0</td><td>0</td><td>0</td><td>0</td><td>0</td><td>0</td><td>0</td></tr>
<tr><td><a>Zack Bellen</a></td><td>0</td><td>0</td><td>0</td><td>0</td><td>0</td><td>0</td><td>0</td><td>0</td><td>0</td><td>0</td><td>0</td><td>0</td><td>0</td><td>0</td></tr>
</tbody>
</table>

<div class="abs" style="left:150px;top:77px;width:1925px;height:11px;background:linear-gradient(to bottom,rgba(0,0,0,0.10),rgba(0,0,0,0.03) 60%,rgba(0,0,0,0));-webkit-mask-image:linear-gradient(to right,transparent,#000 18px,#000 1890px,transparent);z-index:3"></div>
<div class="abs" style="left:80px;top:75px;width:2010px;height:2px;background:#072b40;z-index:6"></div>
<div class="abs" style="left:566px;top:581px;width:24px;height:40px;border:4px solid #fdb22d;border-radius:12px;z-index:3"></div>
<div id="foot"></div>
<!-- FOOTER -->
<div class="abs" style="left:80px;top:1455px;width:2010px;height:53px;z-index:8">
<div class="abs" style="left:0;top:0;width:12px;height:53px;background:linear-gradient(to right,rgba(0,0,0,0.18),rgba(0,0,0,0))"></div>
<svg class="abs" style="left:16px;top:9px" width="36" height="36" viewBox="0 0 36 36"><circle cx="18" cy="18" r="17.5" fill="#fff"/><circle cx="18" cy="18" r="12" fill="none" stroke="#0a364b" stroke-width="2.2"/><path d="M17.5 9.5 V18.5 L23 23" fill="none" stroke="#0a364b" stroke-width="2.2"/></svg>
<svg class="abs" style="left:64px;top:9px" width="36" height="36" viewBox="0 0 36 36"><circle cx="18" cy="18" r="17.5" fill="#fff"/><rect x="6.5" y="9.5" width="23" height="17" rx="2.5" fill="none" stroke="#0a364b" stroke-width="2.6"/><path d="M7.5 11 L18 19 L28.5 11" fill="none" stroke="#0a364b" stroke-width="2.6"/></svg>
<svg class="abs" style="left:112px;top:9px" width="36" height="36" viewBox="0 0 36 36"><circle cx="18" cy="18" r="17.5" fill="#fff"/><rect x="13" y="11" width="17" height="13" rx="1.5" fill="none" stroke="#0a364b" stroke-width="2"/><path d="M13.5 12 L21.5 18 L29.5 12" fill="none" stroke="#0a364b" stroke-width="2"/><path d="M5 14 H11 M6 17.5 H11 M5 21 H11" stroke="#0a364b" stroke-width="1.5"/></svg>
<svg class="abs" style="left:160px;top:9px" width="36" height="36" viewBox="0 0 36 36"><circle cx="18" cy="18" r="17.5" fill="#fff"/>
<g stroke-width="3.1" stroke-linecap="round"><path d="M10 15.3 H17.2" stroke="#36c5f0"/><path d="M20.7 9.6 V17" stroke="#2eb67d"/><path d="M19 20.7 H26.2" stroke="#ecb22e"/><path d="M15.3 19 V26.4" stroke="#e01e5a"/></g><circle cx="15.3" cy="10.6" r="1.6" fill="#36c5f0"/><circle cx="25.4" cy="15.3" r="1.6" fill="#2eb67d"/><circle cx="20.7" cy="25.4" r="1.6" fill="#ecb22e"/><circle cx="10.6" cy="20.7" r="1.6" fill="#e01e5a"/></svg>
<div class="abs" style="left:207px;top:9px;width:2px;height:36px;background:#fff"></div>
<div class="abs" style="left:225px;top:6px;width:125px;height:41px;background:#fff;border-radius:4px;text-align:center;line-height:42px;font-size:23px;color:#0a364b">agenda</div>
<div class="abs" style="left:358px;top:6px;width:139px;height:41px;background:#fff;border-radius:4px;text-align:center;line-height:42px;font-size:23px;color:#0a364b">calendar</div>
<div class="abs" style="left:505px;top:6px;width:132px;height:41px;background:#fff;border-radius:4px;text-align:center;line-height:42px;font-size:23px;color:#0a364b">TO-DO's</div>
<div class="abs" style="left:646px;top:6px;width:263px;height:41px;background:#fff;border-radius:4px;text-align:center;line-height:42px;font-size:23px;color:#0a364b">New Accounts Per ...</div>
<svg class="abs" style="left:926px;top:8.5px" width="36" height="36" viewBox="0 0 36 36"><circle cx="18" cy="18" r="17.5" fill="#fff"/><path d="M6.2 29.8 L7.8 23.5 L25 6.3 a3.1 3.1 0 0 1 4.4 4.4 L12.2 28 Z" fill="#0a364b"/></svg>
<svg class="abs" style="left:1918px;top:9px" width="36" height="36" viewBox="0 0 36 36"><circle cx="18" cy="18" r="17.5" fill="#fff"/><rect x="6" y="12" width="24" height="12" rx="6" fill="#0a364b"/><circle cx="24" cy="18" r="4" fill="#fff"/></svg>
</div>

</div>
</body></html>
